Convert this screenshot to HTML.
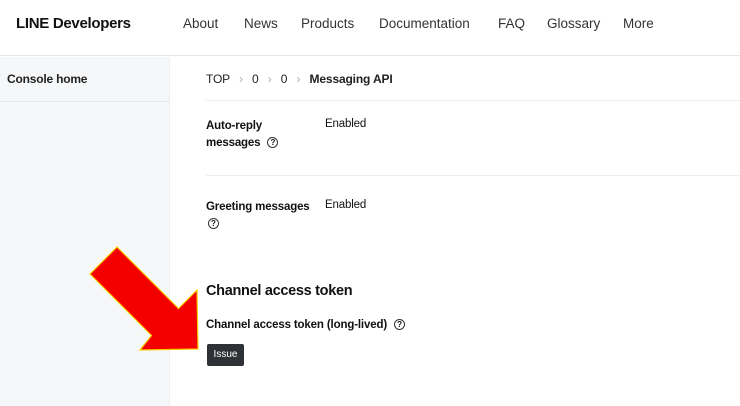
<!DOCTYPE html>
<html><head><style>
*{margin:0;padding:0;box-sizing:border-box}
body{width:740px;height:406px;overflow:hidden;background:#fff;font-family:"Liberation Sans",Arial,sans-serif;color:#111;position:relative}
.hdr{position:absolute;left:0;top:0;width:740px;height:56px;border-bottom:1px solid #e4e6e8;background:#fff}
.logo{position:absolute;left:16px;top:15px;font-size:15px;font-weight:bold;letter-spacing:-0.3px}
.nav{position:absolute;top:16px;font-size:13.5px;color:#333}
.side{position:absolute;left:0;top:57px;width:170px;height:349px;background:#f6f7f8;border-right:1px solid #eceef0}
.side div{height:45px;border-bottom:1px solid #e6e8ea;font-size:12px;font-weight:bold;padding:15px 0 0 7px;color:#222;letter-spacing:-0.2px}
.t{position:absolute;font-size:11.5px;letter-spacing:-0.15px}
.b{font-weight:bold}
.hr{position:absolute;left:206px;width:534px;height:1px;background:#eceef0}
.q{display:inline-block;width:11px;height:11px;border:1.2px solid #333;border-radius:50%;font-size:8px;line-height:9px;text-align:center;font-weight:bold;vertical-align:1px;margin-left:4px;letter-spacing:0}
.btn{position:absolute;left:207px;top:344px;width:37px;height:22px;background:#2e3135;color:#fff;font-size:10px;text-align:center;line-height:22px;border-radius:2px}
</style></head><body>
<div class="hdr">
<div class="logo">LINE Developers</div>
<div class="nav" style="left:183px">About</div>
<div class="nav" style="left:244px">News</div>
<div class="nav" style="left:301px">Products</div>
<div class="nav" style="left:379px">Documentation</div>
<div class="nav" style="left:498px">FAQ</div>
<div class="nav" style="left:547px">Glossary</div>
<div class="nav" style="left:623px">More</div>
</div>
<div class="side"><div>Console home</div></div>
<div class="t" style="left:206px;top:72px;color:#222;font-size:12px">TOP <span style="color:#aaa;margin:0 6px">›</span> 0 <span style="color:#aaa;margin:0 6px">›</span> 0 <span style="color:#aaa;margin:0 6px">›</span> <b>Messaging API</b></div>
<div class="hr" style="top:100px"></div>
<div class="t b" style="left:206px;top:118px;line-height:17px">Auto-reply<br>messages <span class="q">?</span></div>
<div class="t" style="left:325px;top:118px">Enabled</div>
<div class="hr" style="top:175px"></div>
<div class="t b" style="left:206px;top:199px;line-height:17px">Greeting messages<br><span class="q" style="margin-left:2px">?</span></div>
<div class="t" style="left:325px;top:199px">Enabled</div>
<div class="t b" style="left:206px;top:283px;font-size:14.5px;letter-spacing:-0.3px">Channel access token</div>
<div class="t b" style="left:206px;top:319px">Channel access token (long-lived) <span class="q">?</span></div>
<div class="btn">Issue</div>
<svg style="position:absolute;left:0;top:0" width="740" height="406"><polygon points="90,274 117,247 178.5,308.5 197,290 198,349 140,350 151.5,335.5" fill="#f50000" stroke="#f5d000" stroke-width="1.2" stroke-linejoin="miter"/></svg>
</body></html>
